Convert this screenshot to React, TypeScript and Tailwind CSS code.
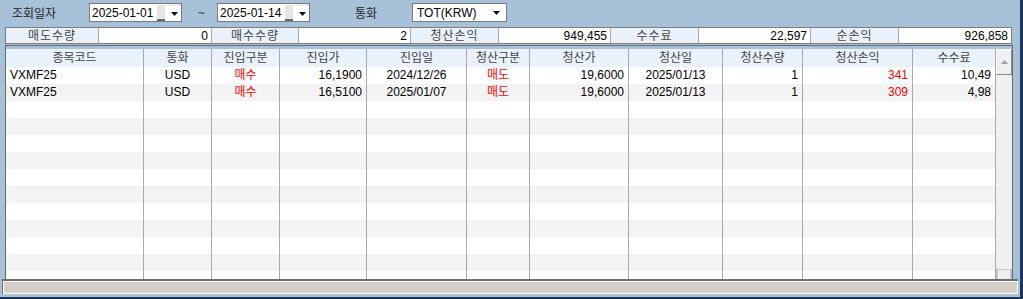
const cols = [
  { name: "종목코드", w: "w-[138px]", align: "text-left pl-[4px]" },
  { name: "통화", w: "w-[68px]", align: "text-center" },
  { name: "진입구분", w: "w-[68px]", align: "text-center" },
  { name: "진입가", w: "w-[87px]", align: "text-right pr-[4px]" },
  { name: "진입일", w: "w-[100px]", align: "text-center" },
  { name: "청산구분", w: "w-[63px]", align: "text-center" },
  { name: "청산가", w: "w-[99px]", align: "text-right pr-[4px]" },
  { name: "청산일", w: "w-[94px]", align: "text-center" },
  { name: "청산수량", w: "w-[80px]", align: "text-right pr-[4px]" },
  { name: "청산손익", w: "w-[110px]", align: "text-right pr-[4px]" },
  { name: "수수료", w: "w-[83px]", align: "text-right pr-[4px]" },
];

const redCols = [2, 5, 9];

const rows = [
  ["VXMF25", "USD", "매수", "16,1900", "2024/12/26", "매도", "19,6000", "2025/01/13", "1", "341", "10,49"],
  ["VXMF25", "USD", "매수", "16,5100", "2025/01/07", "매도", "19,6000", "2025/01/13", "1", "309", "4,98"],
];

const summary = [
  { label: "매도수량", value: "0", lw: "w-[93px]", vw: "w-[113px]" },
  { label: "매수수량", value: "2", lw: "w-[87px]", vw: "w-[112px]" },
  { label: "청산손익", value: "949,455", lw: "w-[88px]", vw: "w-[112px]" },
  { label: "수수료", value: "22,597", lw: "w-[88px]", vw: "w-[112px]" },
  { label: "순손익", value: "926,858", lw: "w-[88px]", vw: "w-[112px]" },
];

function Arrow() {
  return (
    <svg width="7" height="4" viewBox="0 0 7 4">
      <path d="M0 0h7L3.5 4z" fill="#111" />
    </svg>
  );
}

function DateBox({ value }: { value: string }) {
  return (
    <div className="flex h-[19px] w-[93px] items-center border border-[#7a7a7a] bg-white">
      <span className="pl-[2px] text-[12px] leading-none text-black">{value}</span>
      <div className="ml-[4px] h-[16px] w-[8px] border-b-2 border-[#6b6b6b] bg-[#e6e6e6]" />
      <div className="ml-[2px] flex h-full flex-1 items-center justify-center border-t-2 border-[#ececec]">
        <Arrow />
      </div>
    </div>
  );
}

export default function App() {
  const emptyRows = Array.from({ length: 11 });
  return (
    <div className="h-[299px] w-[1023px] overflow-hidden border-r-[3px] border-b-2 border-[#1d3559] bg-[#a7c1d9] font-['Liberation_Sans','Noto_Sans_CJK_KR',sans-serif] text-[12px] text-black">
      {/* search bar */}
      <div className="flex h-[27px] items-start pt-[3px]">
        <span className="ml-[12px] mt-[2px] w-[77px] text-[#222]">조회일자</span>
        <DateBox value="2025-01-01" />
        <span className="ml-[16px] mt-[1px] w-[19px] text-[#333]">~</span>
        <DateBox value="2025-01-14" />
        <span className="ml-[45px] mt-[2px] w-[57px] text-[#222]">통화</span>
        <div className="flex h-[19px] w-[95px] items-center justify-between border border-[#7a7a7a] bg-white pl-[4px] pr-[6px]">
          <span className="leading-none">TOT(KRW)</span>
          <Arrow />
        </div>
      </div>

      {/* summary */}
      <div className="ml-[5px] flex h-[17px] w-[1007px] border border-[#7d7d7d] bg-white">
        {summary.map((s, i) => (
          <div key={i} className="flex">
            <div className={`${s.lw} flex items-center justify-center border-r border-[#a9a9a9] bg-[#e9f1fb] tracking-[1px] text-[#444]`}>
              {s.label}
            </div>
            <div
              className={`${s.vw} flex items-center justify-end pr-[3px] ${i < 4 ? "border-r border-[#a9a9a9]" : ""}`}
            >
              {s.value}
            </div>
          </div>
        ))}
      </div>

      {/* grid */}
      <div className="ml-[5px] mt-[1px] flex h-[234px] w-[1008px] flex-col border-t border-l border-r border-[#6a6a6a]">
        <div className="h-[3px]" />
        <div className="flex flex-1 overflow-hidden">
          <div className="flex w-[990px] flex-col">
            <div className="flex h-[18px] bg-[#e9f1fb] leading-[19px] text-[#444]">
              {cols.map((c, i) => (
                <div key={i} className={`${c.w} shrink-0 border-r border-[#a9a9a9] text-center`}>
                  {c.name}
                </div>
              ))}
            </div>
            <div className="h-[212px] overflow-hidden">
              {rows.map((r, ri) => (
                <div key={ri} className={`flex h-[17px] leading-[17px] ${ri % 2 === 1 ? "bg-[#f3f3f3]" : "bg-white"}`}>
                  {r.map((v, ci) => (
                    <div
                      key={ci}
                      className={`${cols[ci].w} ${cols[ci].align} shrink-0 border-r border-[#a9a9a9] ${redCols.includes(ci) ? "text-[#ff0000]" : ""}`}
                    >
                      {v}
                    </div>
                  ))}
                </div>
              ))}
              {emptyRows.map((_, ri) => (
                <div key={ri} className={`flex h-[17px] ${ri % 2 === 1 ? "bg-[#f3f3f3]" : "bg-white"}`}>
                  {cols.map((c, ci) => (
                    <div key={ci} className={`${c.w} shrink-0 border-r border-[#a9a9a9]`} />
                  ))}
                </div>
              ))}
            </div>
          </div>
          {/* vertical scrollbar */}
          <div className="flex w-[16px] flex-col">
            <div className="flex h-[26px] items-center justify-center border-t border-l border-white border-r border-b border-r-[#8a8a8a] border-b-[#8a8a8a] bg-[#efefef]">
              <svg width="7" height="4" viewBox="0 0 7 4">
                <path d="M3.5 0L7 4H0z" fill="#a0a0a0" />
              </svg>
            </div>
            <div className="flex-1 bg-[image:repeating-conic-gradient(#e4e4e4_0%_25%,#ffffff_0%_50%)] bg-[length:2px_2px]" />
            <div className="mx-[1px] h-[10px] border-t border-l border-r border-[#c8c8c8] bg-[#efefef]" />
          </div>
        </div>
      </div>

      {/* horizontal bar */}
      <div className="ml-[2px] h-[15px] w-[1016px] border-t-2 border-l border-[#6e6e6e]">
        <div className="h-full border border-white bg-[#d4d0c8]" />
      </div>
    </div>
  );
}
